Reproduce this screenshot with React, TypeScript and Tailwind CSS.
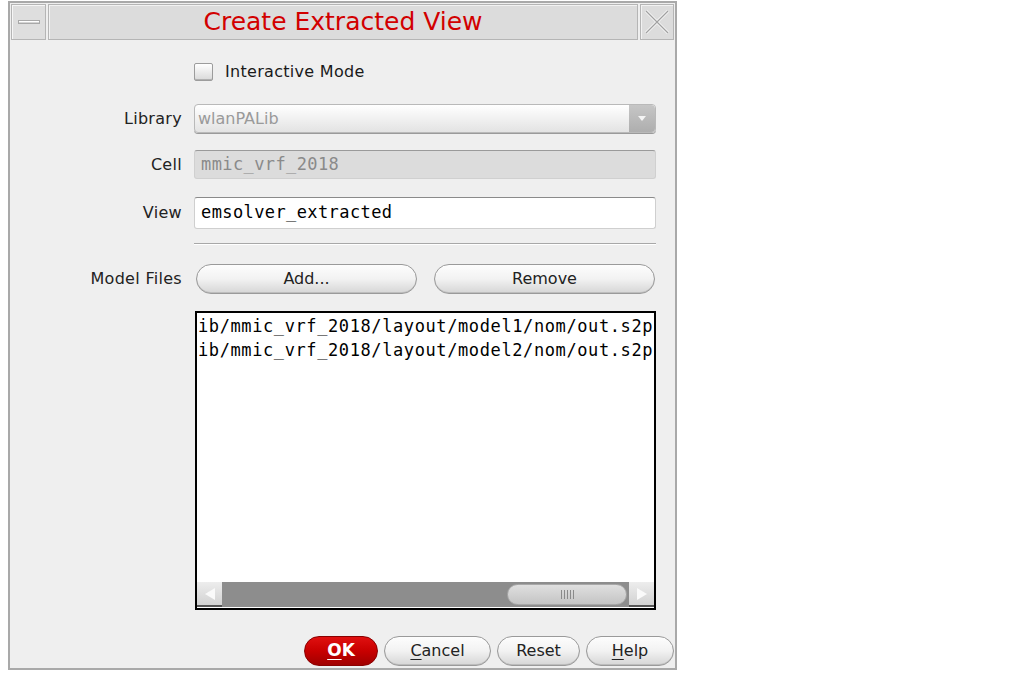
// Create Extracted View dialog
const sans = { fontFamily: '"DejaVu Sans", Verdana, sans-serif' };
const mono = { fontFamily: '"DejaVu Sans Mono", "Liberation Mono", monospace' };

function PillButton({ children, className = '' }: { children: React.ReactNode; className?: string }) {
  return (
    <button
      className={`h-[30px] rounded-full border border-[#9a9a9a] bg-gradient-to-b from-[#fdfdfd] via-[#f2f2f2] to-[#d6d6d6] text-[16px] text-[#222] shadow-[inset_0_-1px_0_#bdbdbd] ${className}`}
      style={sans}
    >
      {children}
    </button>
  );
}

export default function App() {
  return (
    <div className="w-[1013px] h-[677px] bg-white pl-[8px] pt-[1px]" style={sans}>
      <div className="w-[669px] h-[669px] border-2 border-[#a9a9a9] bg-[#efefef] flex flex-col">
        {/* title bar */}
        <div className="flex h-[36px] mt-[1px] gap-[2px] px-[1px]">
          <div className="w-[35px] border border-[#b5b5b5] bg-[#dedede] shadow-[inset_1px_1px_0_#f6f6f6] flex items-center justify-center">
            <div className="w-[22px] h-[4px] bg-[#d4d4d4] border border-[#a8a8a8] shadow-[inset_0_1px_0_#fff]" />
          </div>
          <div className="flex-1 border border-[#b5b5b5] bg-[#dcdcdc] shadow-[inset_1px_1px_0_#f2f2f2] flex items-center justify-center pb-[1px]">
            <span className="text-[25px] text-[#d20000] leading-none" style={sans}>Create Extracted View</span>
          </div>
          <div className="w-[34px] border border-[#b5b5b5] bg-[#dcdcdc] shadow-[inset_1px_1px_0_#f2f2f2] flex items-center justify-center">
            <svg width="26" height="26" viewBox="0 0 26 26">
              <path d="M2 2 L24 24 M24 2 L2 24" stroke="#f7f7f7" strokeWidth="3" />
              <path d="M2 2 L24 24 M24 2 L2 24" stroke="#a0a0a0" strokeWidth="1.2" />
            </svg>
          </div>
        </div>

        {/* body */}
        <div className="flex flex-col">
          <div className="flex items-center h-[20px] mt-[22px] pl-[184px]">
            <div className="w-[19px] h-[18px] rounded-[2px] border border-[#9c9c9c] bg-gradient-to-b from-[#ffffff] to-[#d9d9d9] shadow-[inset_0_-1px_0_#b0b0b0]" />
            <span className="ml-[12px] text-[16px] text-[#1a1a1a] tracking-[0.3px]">Interactive Mode</span>
          </div>

          <div className="flex items-center h-[29px] mt-[22px]">
            <span className="w-[172px] text-right text-[16px] text-[#222] tracking-[0.3px]">Library</span>
            <div className="ml-[12px] w-[462px] h-[29px] rounded-[4px] border border-[#b9b9b9] bg-gradient-to-b from-[#ffffff] to-[#e3e3e3] flex items-center shadow-[0_1px_0_#9a9a9a]">
              <span className="flex-1 pl-[3px] text-[16px] text-[#9a9a9a]">wlanPALib</span>
              <div className="w-[26px] h-full rounded-r-[4px] bg-gradient-to-b from-[#c6c6c6] to-[#aeaeae] flex items-center justify-center">
                <svg width="8" height="5" viewBox="0 0 8 5"><path d="M0 0 L8 0 L4 5 Z" fill="#f4f4f4" /></svg>
              </div>
            </div>
          </div>

          <div className="flex items-center h-[29px] mt-[17px]">
            <span className="w-[172px] text-right text-[16px] text-[#222] tracking-[0.3px]">Cell</span>
            <div className="ml-[12px] w-[462px] h-[29px] rounded-[3px] border border-[#d0d0d0] border-t-[#9a9a9a] bg-[#dcdcdc] flex items-center">
              <span className="pl-[6px] text-[17px] tracking-[0.4px] text-[#8a8a8a]" style={mono}>mmic_vrf_2018</span>
            </div>
          </div>

          <div className="flex items-center h-[32px] mt-[18px]">
            <span className="w-[172px] text-right text-[16px] text-[#222] tracking-[0.3px]">View</span>
            <div className="ml-[12px] w-[462px] h-[32px] rounded-[3px] border border-[#cfcfcf] border-t-[#8a8a8a] bg-white flex items-center">
              <span className="pl-[6px] text-[17px] tracking-[0.4px] text-black" style={mono}>emsolver_extracted</span>
            </div>
          </div>

          <div className="ml-[184px] w-[462px] h-[2px] mt-[14px] border-t border-[#a8a8a8] border-b-white border-b" />

          <div className="flex items-center h-[30px] mt-[19px]">
            <span className="w-[172px] text-right text-[16px] text-[#222] tracking-[0.3px]">Model Files</span>
            <PillButton className="ml-[14px] w-[221px]">Add...</PillButton>
            <PillButton className="ml-[17px] w-[221px]">Remove</PillButton>
          </div>

          <div className="ml-[185px] mt-[17px] w-[461px] h-[299px] border-2 border-black bg-white flex flex-col">
            <div className="flex-1 pl-[1px] pt-[1px] overflow-hidden text-[17px] tracking-[0.6px] leading-[24px] text-black whitespace-nowrap" style={mono}>
              <div>ib/mmic_vrf_2018/layout/model1/nom/out.s2p</div>
              <div>ib/mmic_vrf_2018/layout/model2/nom/out.s2p</div>
            </div>
            <div className="h-[25px] mb-[1px] bg-[#8d8d8d] flex items-center">
              <div className="w-[25px] h-full bg-gradient-to-b from-[#ededed] to-[#d2d2d2] border-b-2 border-[#555] flex items-center justify-center">
                <svg width="10" height="12" viewBox="0 0 10 12"><path d="M10 0 L10 12 L0 6 Z" fill="#fafafa" /></svg>
              </div>
              <div className="flex-1 flex justify-end pr-[2px]">
                <div className="w-[120px] h-[21px] rounded-full bg-gradient-to-b from-[#e0e0e0] to-[#c4c4c4] border border-[#a8a8a8] flex items-center justify-center gap-[2px]">
                  <div className="w-[1px] h-[9px] bg-[#8a8a8a]" />
                  <div className="w-[1px] h-[9px] bg-[#8a8a8a]" />
                  <div className="w-[1px] h-[9px] bg-[#8a8a8a]" />
                  <div className="w-[1px] h-[9px] bg-[#8a8a8a]" />
                  <div className="w-[1px] h-[9px] bg-[#8a8a8a]" />
                </div>
              </div>
              <div className="w-[25px] h-full bg-gradient-to-b from-[#ededed] to-[#d2d2d2] border-b-2 border-[#555] flex items-center justify-center">
                <svg width="10" height="12" viewBox="0 0 10 12"><path d="M0 0 L0 12 L10 6 Z" fill="#fafafa" /></svg>
              </div>
            </div>
          </div>

          <div className="flex justify-end items-center gap-[6px] mt-[26px] pr-[1px]">
            <button
              className="w-[74px] h-[30px] rounded-full border border-[#8a0000] bg-gradient-to-b from-[#e01010] via-[#c80000] to-[#a00000] text-[17px] font-bold text-white"
              style={sans}
            >
              <span className="underline underline-offset-[3px]">O</span>K
            </button>
            <PillButton className="w-[107px]">
              <span className="underline underline-offset-[3px]">C</span>ancel
            </PillButton>
            <PillButton className="w-[83px]">Reset</PillButton>
            <PillButton className="w-[88px]">
              <span className="underline underline-offset-[3px]">H</span>elp
            </PillButton>
          </div>
        </div>
      </div>
    </div>
  );
}
